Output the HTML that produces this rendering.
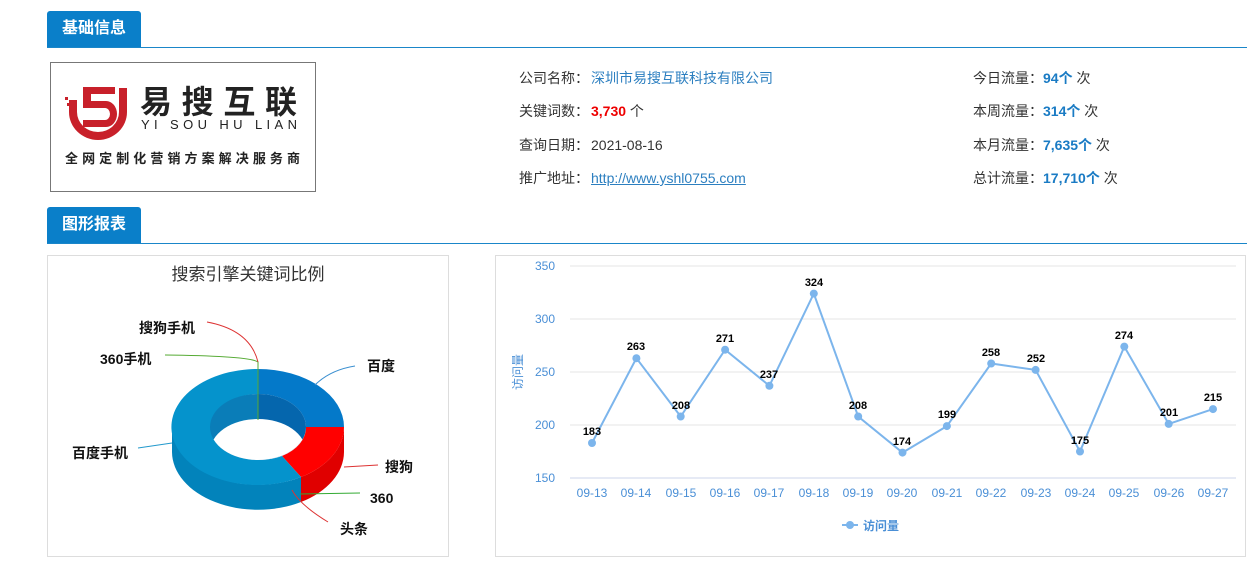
<!DOCTYPE html>
<html><head><meta charset="utf-8"><style>
body{margin:0;width:1253px;height:564px;background:#fff;font-family:"Liberation Sans","Noto Sans CJK SC",sans-serif;position:relative;overflow:hidden;color:#333}
.abs{position:absolute}
.tab{position:absolute;left:47px;width:94px;height:36px;background:#0a7fc9;color:#fff;font-weight:bold;font-size:16px;line-height:36px;text-align:center;border-radius:3px 3px 0 0}
.hl{position:absolute;left:47px;width:1200px;height:1px;background:#1a86c9}
.row{position:absolute;font-size:14px;color:#333;white-space:nowrap}
.b{color:#1a7bc4;font-weight:bold}
</style></head><body>
<div class="tab" style="top:11px">基础信息</div><div class="hl" style="top:47px"></div>
<div class="tab" style="top:207px">图形报表</div><div class="hl" style="top:243px"></div>

<div class="abs" style="left:50px;top:62px;width:264px;height:128px;border:1px solid #777"></div>
<svg class="abs" style="left:60px;top:80px" width="250" height="95">
<path d="M9 20 L9 32 A29 28 0 0 0 67 32 L67 8 L59 8 L59 32 A21 20 0 0 1 17 32 L17 20Z" fill="#c8202a"/>
<path d="M23 7 L55 7 L55 14 L31 14 L31 21 L46 21 A11 13 0 0 1 46 47 L23 47 L23 40 L45 40 A5 6 0 0 0 45 28 L23 28Z" fill="#c8202a"/>
<rect x="5" y="17" width="3" height="3" fill="#c8202a"/><rect x="7" y="23" width="3" height="3" fill="#c8202a"/>
<text x="80" y="33" font-size="32" font-weight="bold" fill="#222" font-family="Noto Sans CJK SC" textLength="157" lengthAdjust="spacing">易搜互联</text>
<text x="81" y="49" font-size="13" fill="#222" textLength="156" lengthAdjust="spacing">YI SOU HU LIAN</text>
<text x="5" y="83" font-size="13" font-weight="bold" fill="#222" font-family="Noto Sans CJK SC" textLength="235" lengthAdjust="spacing">全网定制化营销方案解决服务商</text>
</svg>

<div class="row" style="left:519px;top:68px">公司名称：<span style="color:#2c7fc0;margin-left:2px">深圳市易搜互联科技有限公司</span></div>
<div class="row" style="left:519px;top:101px">关键词数：<b style="color:#e00;margin-left:2px">3,730</b> 个</div>
<div class="row" style="left:519px;top:135px">查询日期：<span style="margin-left:2px">2021-08-16</span></div>
<div class="row" style="left:519px;top:168px">推广地址：<span style="color:#2c7fc0;text-decoration:underline;margin-left:2px">http://www.yshl0755.com</span></div>
<div class="row" style="left:973px;top:68px">今日流量：<span class="b">94个</span> 次</div>
<div class="row" style="left:973px;top:101px">本周流量：<span class="b">314个</span> 次</div>
<div class="row" style="left:973px;top:135px">本月流量：<span class="b">7,635个</span> 次</div>
<div class="row" style="left:973px;top:168px">总计流量：<span class="b">17,710个</span> 次</div>

<div class="abs" style="left:47px;top:255px;width:400px;height:300px;border:1px solid #ddd"></div>
<div class="abs" style="left:495px;top:255px;width:749px;height:300px;border:1px solid #ddd"></div>

<svg class="abs" style="left:0;top:0" width="1253" height="564" font-family="Liberation Sans,Noto Sans CJK SC,sans-serif">
<text x="248" y="280" font-size="17" fill="#333" text-anchor="middle">搜索引擎关键词比例</text>
<path d="M344 427 A86 58 0 0 1 301 477 L301 502 A86 58 0 0 0 344 452Z" fill="#e00000"/>
<path d="M301 477 A86 58 0 0 1 172 427 L172 452 A86 58 0 0 0 301 502Z" fill="#0283bb"/>
<path d="M258 369 A86 58 0 0 1 344 427 L306 427 A48 33 0 0 0 258 394Z" fill="#0479c9"/>
<path d="M344 427 A86 58 0 0 1 301 477 L282 456 A48 33 0 0 0 306 427Z" fill="#ff0000"/>
<path d="M301 477 A86 58 0 1 1 258 369 L258 394 A48 33 0 1 0 282 456Z" fill="#0593cc"/>
<path d="M258 394 A48 33 0 0 0 210 427 A48 33 0 0 0 258 460Z" fill="#0a7db8"/>
<path d="M258 394 A48 33 0 0 1 306 427 A48 33 0 0 1 258 460Z" fill="#0566ad"/>
<clipPath id="hc"><ellipse cx="258" cy="427" rx="48" ry="33"/></clipPath>
<ellipse cx="258" cy="452" rx="48" ry="33" fill="#fff" clip-path="url(#hc)"/>
<g fill="none" stroke-width="1">
<path d="M315 385 Q330 370 355 366" stroke="#3a8fd0"/>
<path d="M344 467 L378 465" stroke="#d33"/>
<path d="M300 494 L360 493" stroke="#3a3"/>
<path d="M292 490 Q300 505 328 522" stroke="#d33"/>
<path d="M172 443 L138 448" stroke="#29c"/>
<path d="M258 420 L258 362 Q250 356 165 355" stroke="#5a3"/>
<path d="M258 362 Q250 330 207 322" stroke="#d33"/>
</g>
<g font-size="14" font-weight="bold" fill="#111">
<text x="367" y="371">百度</text><text x="385" y="472">搜狗</text><text x="370" y="503">360</text>
<text x="340" y="534">头条</text><text x="72" y="458">百度手机</text><text x="100" y="364">360手机</text><text x="139" y="333">搜狗手机</text>
</g>
<g stroke="#e4e4e4"><line x1="570" y1="266" x2="1236" y2="266"/><line x1="570" y1="319" x2="1236" y2="319"/><line x1="570" y1="372" x2="1236" y2="372"/><line x1="570" y1="425" x2="1236" y2="425"/></g>
<line x1="570" y1="478" x2="1236" y2="478" stroke="#ccd6eb"/>
<g font-size="12" fill="#4a8fd6" text-anchor="end"><text x="555" y="270">350</text><text x="555" y="323">300</text><text x="555" y="376">250</text><text x="555" y="429">200</text><text x="555" y="482">150</text></g>
<text transform="translate(522,372) rotate(-90)" font-size="12" fill="#4a8fd6" text-anchor="middle">访问量</text>
<g font-size="12" fill="#4a8fd6" text-anchor="middle">
<text x="592" y="497">09-13</text><text x="636" y="497">09-14</text><text x="681" y="497">09-15</text><text x="725" y="497">09-16</text><text x="769" y="497">09-17</text><text x="814" y="497">09-18</text><text x="858" y="497">09-19</text><text x="902" y="497">09-20</text><text x="947" y="497">09-21</text><text x="991" y="497">09-22</text><text x="1036" y="497">09-23</text><text x="1080" y="497">09-24</text><text x="1124" y="497">09-25</text><text x="1169" y="497">09-26</text><text x="1213" y="497">09-27</text></g>
<polyline fill="none" stroke="#7cb5ec" stroke-width="2" points="592,443 636.4,358.2 680.7,416.5 725.1,349.7 769.4,385.8 813.8,293.6 858.2,416.5 902.5,452.6 946.9,426.1 991.2,363.5 1035.6,369.9 1080,451.5 1124.3,346.6 1168.7,423.9 1213,409.1"/>
<g fill="#7cb5ec"><circle cx="592" cy="443" r="4"/><circle cx="636.4" cy="358.2" r="4"/><circle cx="680.7" cy="416.5" r="4"/><circle cx="725.1" cy="349.7" r="4"/><circle cx="769.4" cy="385.8" r="4"/><circle cx="813.8" cy="293.6" r="4"/><circle cx="858.2" cy="416.5" r="4"/><circle cx="902.5" cy="452.6" r="4"/><circle cx="946.9" cy="426.1" r="4"/><circle cx="991.2" cy="363.5" r="4"/><circle cx="1035.6" cy="369.9" r="4"/><circle cx="1080" cy="451.5" r="4"/><circle cx="1124.3" cy="346.6" r="4"/><circle cx="1168.7" cy="423.9" r="4"/><circle cx="1213" cy="409.1" r="4"/></g>
<g font-size="11" font-weight="bold" fill="#000" text-anchor="middle">
<text x="592" y="435">183</text><text x="636" y="350">263</text><text x="681" y="409">208</text><text x="725" y="342">271</text><text x="769" y="378">237</text><text x="814" y="286">324</text><text x="858" y="409">208</text><text x="902" y="445">174</text><text x="947" y="418">199</text><text x="991" y="356">258</text><text x="1036" y="362">252</text><text x="1080" y="444">175</text><text x="1124" y="339">274</text><text x="1169" y="416">201</text><text x="1213" y="401">215</text></g>
<line x1="842" y1="525" x2="858" y2="525" stroke="#7cb5ec" stroke-width="2"/><circle cx="850" cy="525" r="4" fill="#7cb5ec"/>
<text x="863" y="530" font-size="12" font-weight="bold" fill="#4a8fd6">访问量</text>
</svg>
</body></html>
